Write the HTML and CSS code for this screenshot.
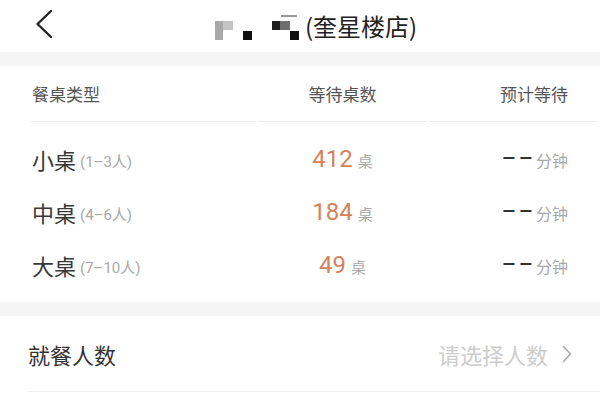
FILE: index.html
```html
<!DOCTYPE html>
<html lang="zh-CN">
<head>
<meta charset="utf-8">
<link rel="stylesheet" href="styles.css">
</head>
<body>
<div class="page">
  <header class="topbar">
    <svg class="back" width="18" height="30" viewBox="0 0 18 30"><path d="M16 2 L2.5 15 L16 28" fill="none" stroke="#222" stroke-width="2.4" stroke-linecap="round" stroke-linejoin="round"/></svg>
    <div class="title">
      <svg class="mosaic" width="92" height="28" viewBox="0 0 92 28">
        <rect x="0" y="8" width="8" height="19" fill="#a8a8a8"/>
        <rect x="8" y="8" width="10" height="9" fill="#c4c4c4"/>
        <rect x="28" y="18" width="9" height="9" fill="#111"/>
        <rect x="57" y="8" width="8" height="9" fill="#1e1e1e"/>
        <rect x="65" y="8" width="10" height="9" fill="#6e6e6e"/>
        <rect x="75" y="18" width="9" height="9" fill="#111"/>
        <rect x="66" y="2" width="16" height="2" fill="#999"/>
      </svg>
      <span class="title-text">(奎星楼店)</span>
    </div>
  </header>
  <div class="band"></div>
  <section class="table">
    <div class="grid head">
      <div class="cell c1">餐桌类型</div>
      <div class="cell c2">等待桌数</div>
      <div class="cell c3">预计等待</div>
    </div>
    <div class="rows">
      <div class="grid row">
        <div class="c1"><span class="name">小桌</span><span class="sub">(1–3人)</span></div>
        <div class="c2"><span class="num">412</span><span class="sub">桌</span></div>
        <div class="c3"><span class="dash">––</span><span class="sub">分钟</span></div>
      </div>
      <div class="grid row">
        <div class="c1"><span class="name">中桌</span><span class="sub">(4–6人)</span></div>
        <div class="c2"><span class="num">184</span><span class="sub">桌</span></div>
        <div class="c3"><span class="dash">––</span><span class="sub">分钟</span></div>
      </div>
      <div class="grid row">
        <div class="c1"><span class="name">大桌</span><span class="sub">(7–10人)</span></div>
        <div class="c2"><span class="num">49</span><span class="sub">桌</span></div>
        <div class="c3"><span class="dash">––</span><span class="sub">分钟</span></div>
      </div>
    </div>
  </section>
  <div class="band"></div>
  <section class="picker">
    <span class="picker-label">就餐人数</span>
    <span class="picker-value">请选择人数
      <svg class="arrow" width="10" height="18" viewBox="0 0 10 18"><path d="M1.5 1.5 L8.5 9 L1.5 16.5" fill="none" stroke="#a8a8a8" stroke-width="1.6" stroke-linecap="round" stroke-linejoin="round"/></svg>
    </span>
  </section>
</div>
</body>
</html>
```
FILE: styles.css
```css
html, body {
  margin: 0;
  padding: 0;
  background: #fff;
}
body {
  font-family: Roboto, "Noto Sans CJK SC", sans-serif;
  color: #333;
}
.page {
  width: 600px;
  height: 402px;
  overflow: hidden;
}
.topbar {
  height: 52px;
  display: flex;
  align-items: center;
  padding-left: 35px;
}
.back {
  display: block;
  margin-top: -4px;
}
.title {
  display: flex;
  align-items: center;
  margin-left: 162px;
}
.mosaic {
  display: block;
  margin-top: 2px;
}
.title-text {
  font-family: "Noto Sans CJK SC", sans-serif;
  font-size: 24px;
  color: #222;
  line-height: 30px;
  margin-left: -2px;
}
.band {
  height: 14px;
  background: #f5f5f5;
}
.grid {
  display: grid;
  grid-template-columns: 225px 169px 1fr;
  column-gap: 3px;
  padding: 0 3px 0 30px;
}
.head {
  height: 56px;
}
.head .cell {
  display: flex;
  align-items: center;
  border-bottom: 1px solid #ececec;
  font-family: "Noto Sans CJK SC", sans-serif;
  font-size: 17px;
  color: #555;
}
.c1 {
  padding-left: 2px;
  display: flex;
  align-items: center;
}
.c2 {
  display: flex;
  align-items: center;
  justify-content: center;
}
.c3 {
  display: flex;
  align-items: center;
  justify-content: flex-end;
  padding-right: 29px;
}
.rows {
  padding: 10px 0 11px;
}
.row {
  height: 53px;
  align-items: center;
}
.row > div {
  height: 100%;
}
.name {
  font-family: "Noto Sans CJK SC", sans-serif;
  font-size: 22px;
  color: #383838;
}
.sub {
  font-size: 15px;
  color: #a8a8a8;
  margin-left: 4px;
  margin-top: 3px;
}
.num {
  font-size: 24px;
  color: #d4825a;
}
.c2 .sub {
  margin-left: 5px;
}
.dash {
  font-size: 22px;
  color: #333;
  letter-spacing: 3px;
  font-weight: 500;
}
.c3 .sub {
  font-size: 16px;
  margin-left: 0;
}
.picker {
  height: 75px;
  margin-left: 28px;
  padding-right: 28px;
  border-bottom: 1px solid #eeeeee;
  display: flex;
  align-items: center;
  justify-content: space-between;
  font-family: "Noto Sans CJK SC", sans-serif;
}
.picker-label {
  font-size: 22px;
  color: #333;
}
.picker-value {
  font-size: 22px;
  color: #cccccc;
  display: flex;
  align-items: center;
}
.arrow {
  display: block;
  margin-left: 14px;
}
```
